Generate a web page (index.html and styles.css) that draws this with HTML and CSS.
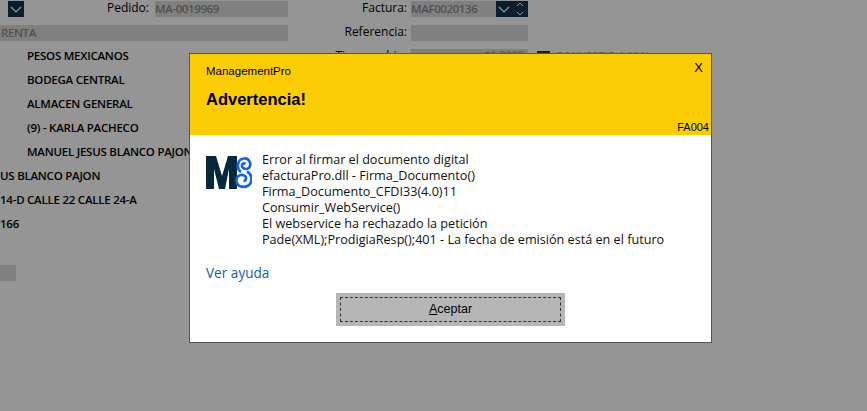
FILE: index.html
```html
<!DOCTYPE html>
<html lang="en">
<head>
  <meta charset="UTF-8">
  <meta name="viewport" content="width=device-width, initial-scale=1.0">
  <title>ManagementPro</title>
  <link rel="stylesheet" href="styles.css">
</head>
<body>
  <div class="form">
    <div class="col-left">
      <div class="row">
        <span class="drop-btn">
          <svg width="16" height="16" viewBox="0 0 16 16"><path d="M3 6l5 5 5-5" fill="none" stroke="#fff" stroke-width="1.2"/></svg>
        </span>
        <label class="label-pedido">Pedido:</label>
        <span class="input input-pedido">MA-0019969</span>
      </div>
      <div class="row"><span class="input input-full">RENTA</span></div>
      <div class="row value indent">PESOS MEXICANOS</div>
      <div class="row value indent">BODEGA CENTRAL</div>
      <div class="row value indent">ALMACEN GENERAL</div>
      <div class="row value indent">(9) - KARLA PACHECO</div>
      <div class="row value indent">MANUEL JESUS BLANCO PAJON</div>
      <div class="row value">US BLANCO PAJON</div>
      <div class="row value">14-D CALLE 22 CALLE 24-A</div>
      <div class="row value">166</div>
      <div class="row"></div>
      <div class="row"><span class="stub"></span></div>
    </div>
    <div class="col-right">
      <div class="row">
        <label class="label-right">Factura:</label>
        <span class="input input-factura">MAF0020136</span>
        <span class="drop-btn">
          <svg width="16" height="16" viewBox="0 0 16 16"><path d="M3 6l5 5 5-5" fill="none" stroke="#fff" stroke-width="1.2"/></svg>
        </span>
        <span class="drop-btn">
          <svg width="16" height="16" viewBox="0 0 16 16"><path d="M5 5l3-3 3 3M5 11l3 3 3-3" fill="none" stroke="#fff" stroke-width="1"/></svg>
        </span>
      </div>
      <div class="row">
        <label class="label-right">Referencia:</label>
        <span class="input input-wide"></span>
      </div>
      <div class="row">
        <label class="label-right">Tipo cambio:</label>
        <span class="input input-wide input-num">$1.0000</span>
        <span class="check"></span>
        <span class="check-text">CONVERTIR A M.N.</span>
      </div>
    </div>
  </div>

  <div class="overlay"></div>

  <div class="modal">
    <div class="modal-head">
      <div class="modal-app">ManagementPro</div>
      <div class="modal-title">Advertencia!</div>
      <span class="modal-close">X</span>
      <span class="modal-code">FA004</span>
    </div>
    <div class="modal-body">
      <div class="message">
        <svg class="logo" width="46" height="35" viewBox="0 0 46 35">
          <path d="M0 1h10l6 20 6-20h9v33h-8V14l-4 20h-6L8 14v20H0z" fill="#06283d"/>
          <g fill="none" stroke="#1565d8" stroke-width="2.7">
            <path d="M35 17C30 14 31 4 38 3.5 43 3 45 8 44 11 43 15 37 15 36 11 35.5 9 38 7.5 39.5 9"/>
            <path d="M41 16.5C46 19 46.5 25 44 29 41 33 33 33 31 28 29 23 33 19 37 20 41 21 41 26 37.5 26"/>
          </g>
        </svg>
        <div class="message-text">
          <div>Error al firmar el documento digital</div>
          <div>efacturaPro.dll - Firma_Documento()</div>
          <div>Firma_Documento_CFDI33(4.0)11</div>
          <div>Consumir_WebService()</div>
          <div>El webservice ha rechazado la petición</div>
          <div>Pade(XML);ProdigiaResp();401 - La fecha de emisión está en el futuro</div>
        </div>
      </div>
      <a class="help-link" href="#">Ver ayuda</a>
      <div class="button-container">
        <button class="accept-btn"><span class="accept-inner"><u>A</u>ceptar</span></button>
      </div>
    </div>
  </div>
</body>
</html>
```

FILE: styles.css
```css
* {
  box-sizing: border-box;
}

html, body {
  height: 100%;
}

body {
  margin: 0;
  background-color: #fff;
  font-family: "Open Sans", "Noto Sans", sans-serif;
  font-size: 12px;
  color: #000;
  overflow: hidden;
}

.form {
  display: flex;
  padding-top: 1px;
}

.col-left {
  width: 288px;
  display: flex;
  flex-direction: column;
  gap: 8px;
  flex-shrink: 0;
}

.col-right {
  display: flex;
  flex-direction: column;
  gap: 8px;
}

.row {
  height: 16px;
  display: flex;
  align-items: center;
  white-space: nowrap;
}

.value {
  padding-bottom: 3px;
  font-weight: 600;
  font-size: 11.5px;
  letter-spacing: -0.24px;
}

.indent {
  padding-left: 27px;
}

.drop-btn {
  width: 16px;
  height: 16px;
  background-color: #11354f;
  display: flex;
  flex-shrink: 0;
}

.col-left .drop-btn {
  margin-left: 8px;
}

.label-pedido {
  width: 129px;
  padding-right: 4px;
  padding-bottom: 4px;
  text-align: right;
}

.input {
  height: 16px;
  background-color: #dcdcdc;
  color: #8a8a8a;
  font-size: 11.5px;
  font-weight: 600;
  letter-spacing: -0.4px;
  line-height: 16px;
  display: block;
}

.input-pedido {
  width: 133px;
  margin-left: 2px;
}

.input-full {
  width: 288px;
  padding-left: 1px;
}

.label-right {
  width: 88px;
  margin-left: 35px;
  padding-right: 4px;
  padding-bottom: 4px;
  text-align: right;
}

.input-factura {
  width: 85px;
}

.input-wide {
  width: 117px;
}

.input-num {
  text-align: right;
  padding-right: 4px;
  line-height: 12px;
  font-weight: 400;
}

.check {
  width: 13px;
  height: 13px;
  margin-left: 9px;
  border: 2px solid #333;
  background-color: #dcdcdc;
}

.check-text {
  align-self: flex-start;
  margin-left: 6px;
  font-size: 10.5px;
  line-height: 14px;
  letter-spacing: 0.3px;
  color: #9a9a9a;
}

.stub {
  width: 16px;
  height: 16px;
  background-color: #dcdcdc;
}

.overlay {
  position: fixed;
  inset: 0;
  background-color: rgba(0, 0, 0, 0.416);
}

.modal {
  position: fixed;
  left: 189px;
  top: 53px;
  width: 523px;
  height: 290px;
  background: white;
  border: 1px solid #555;
  display: flex;
  flex-direction: column;
}

.modal-head {
  position: relative;
  height: 81px;
  background-color: #fccc07;
  padding: 10px 16px 0;
  flex-shrink: 0;
  font-family: "Liberation Sans", Arial, sans-serif;
}

.modal-app {
  font-size: 11.5px;
  line-height: 15px;
}

.modal-title {
  margin-top: 10px;
  font-size: 16.5px;
  font-weight: 700;
  line-height: 20px;
}

.modal-close {
  position: absolute;
  right: 8px;
  top: 6px;
  font-size: 13px;
}

.modal-code {
  position: absolute;
  right: 2px;
  bottom: 2px;
  font-size: 11px;
}

.modal-body {
  flex: 1;
  padding: 17px 16px 0;
  display: flex;
  flex-direction: column;
}

.message {
  display: flex;
  gap: 10px;
}

.logo {
  margin-top: 3px;
  flex-shrink: 0;
}

.message-text {
  font-size: 12.63px;
  line-height: 16px;
  color: #111;
}

.help-link {
  margin-top: 16px;
  color: #0f5f9f;
  font-size: 13.6px;
  line-height: 18px;
  text-decoration: none;
}

.button-container {
  margin-top: 11px;
  margin-left: 130px;
}

.accept-btn {
  display: block;
  width: 229px;
  height: 33px;
  padding: 4px;
  border: none;
  background-color: #b6b6b6;
  font-family: "Liberation Sans", Arial, sans-serif;
  font-size: 12.5px;
  color: #000;
}

.accept-inner {
  display: block;
  height: 100%;
  line-height: 23px;
  border: 1px dashed #333;
}
```
